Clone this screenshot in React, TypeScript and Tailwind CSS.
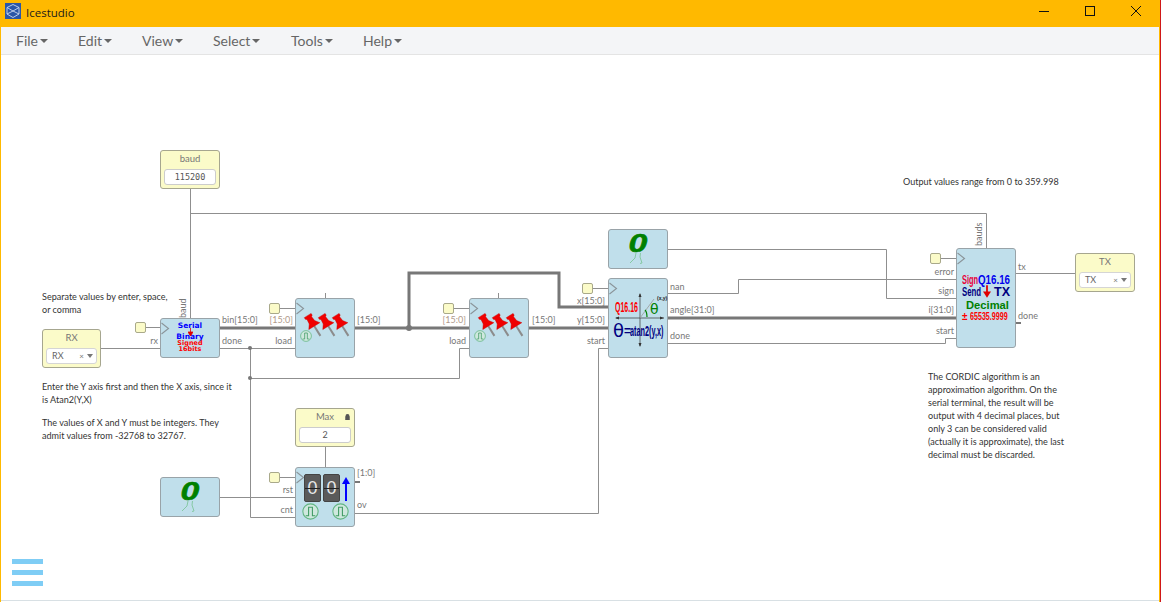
import React from "react";

const LATO = "font-['Lato','Open_Sans',sans-serif]";

function Clock({ className }: { className: string }) {
  return (
    <svg className={`absolute ${className}`} width="9" height="13" viewBox="0 0 9 13">
      <path d="M0.5 1 L7.5 6.5 L0.5 12" fill="none" stroke="#8a9499" strokeWidth="1.1" />
    </svg>
  );
}

function Pulse({ className, size = 14 }: { className: string; size?: number }) {
  return (
    <svg className={`absolute ${className}`} width={size} height={size} viewBox="0 0 16 16">
      <circle cx="8" cy="8" r="7.2" fill="#cfe8de" stroke="#62b583" strokeWidth="1" />
      <path d="M3.5 12 H6.2 V4 H9.8 V12 H12.5" fill="none" stroke="#3f9a63" strokeWidth="1" />
    </svg>
  );
}

function Pins() {
  const one = (x: number) => (
    <g transform={`translate(${x} 0) rotate(-32 7 10)`} key={x}>
      <path d="M7 12 L7 24" stroke="#8c8c8c" strokeWidth="2" />
      <path d="M3 0 H11 V2 L9.7 3 L10.2 8 L13.5 12.5 H0.5 L3.8 8 L4.3 3 L3 2 Z" fill="#f00000" stroke="#c80000" strokeWidth="0.4" />
    </g>
  );
  return (
    <svg className="absolute left-[10px] top-[15px] overflow-visible" width="46" height="24" viewBox="0 0 46 24">
      {one(0)}
      {one(14)}
      {one(28)}
    </svg>
  );
}

function ZeroIcon() {
  return (
    <>
      <span className="absolute left-0 right-0 top-[-3px] scale-x-[1.3] text-center font-['Liberation_Sans',sans-serif] text-[26px] leading-[32px] font-bold italic text-[#008000] [-webkit-text-stroke:0.6px_#008000]">
        0
      </span>
      <svg className="absolute left-[20px] top-[22px]" width="16" height="14" viewBox="0 0 16 14">
        <path d="M7 1 L6 6 L1 11 M11.5 1 L11 5 L13 11 L11 11.5" fill="none" stroke="#86c9a4" strokeWidth="1" />
      </svg>
    </>
  );
}

function Wire({ d, w = 1 }: { d: string; w?: number }) {
  const color = w > 1 ? "#777777" : "#8f8f8f";
  return <path d={d} fill="none" stroke={color} strokeWidth={w} />;
}

function Label({ className, children }: { className: string; children: React.ReactNode }) {
  return <span className={`absolute whitespace-nowrap text-[9px] leading-[12px] text-[#777777] ${className}`}>{children}</span>;
}

function Comment({ className, children }: { className: string; children: React.ReactNode }) {
  return <div className={`absolute whitespace-nowrap text-[9.05px] leading-[13px] text-[#333333] ${className}`}>{children}</div>;
}

function Square({ className }: { className: string }) {
  return <div className={`absolute h-[11px] w-[11px] rounded-[2px] border border-[#a9a98a] bg-[#fbfbc9] ${className}`} />;
}

function SelectBox({ text }: { text: string }) {
  return (
    <div className="mx-[3px] flex h-[16px] items-center rounded-[3px] border border-[#d5d5d5] bg-white pl-[5px] pr-[3px] text-[9px] text-[#666666]">
      <span className="flex-1">{text}</span>
      <span className="mr-[3px] text-[8px] leading-none text-[#777777]">×</span>
      <svg width="6" height="4" viewBox="0 0 6 4">
        <path d="M0 0 H6 L3 4 Z" fill="#777777" />
      </svg>
    </div>
  );
}

function Panel({ className, title, children }: { className: string; title?: React.ReactNode; children: React.ReactNode }) {
  return (
    <div className={`absolute rounded-[3px] border border-[#a6a68f] bg-[#fbfbc9] ${className}`}>
      <div className="h-[18px] pt-[1px] text-center text-[9.5px] leading-[13px] text-[#777777]">{title}</div>
      {children}
    </div>
  );
}

function Block({ className, children }: { className: string; children?: React.ReactNode }) {
  return <div className={`absolute rounded-[3px] border border-[#99a3a8] bg-[#c0dfeb] ${className}`}>{children}</div>;
}

function Diagram() {
  return (
    <div className={`relative flex-1 bg-white ${LATO}`}>
      <svg className="absolute inset-0" width="1161" height="547" viewBox="0 55 1161 547">
        <Wire d="M190.5 188 V318" />
        <Wire d="M190 213.5 H986.5 V248" />
        <Wire d="M100 348.5 H160" />
        <Wire d="M146 327.5 H160" />
        <Wire d="M280 308.5 H295" />
        <Wire d="M454 308.5 H469" />
        <Wire d="M593 288.5 H608" />
        <Wire d="M280 477.5 H295" />
        <Wire d="M941 258.5 H956" />
        <Wire d="M220 328 H295" w={3} />
        <Wire d="M355 328 H469" w={3} />
        <Wire d="M409 328 V273 H559 V307 H608" w={3} />
        <Wire d="M529 328 H608" w={3} />
        <Wire d="M668 318 H956" w={3} />
        <Wire d="M220 348.5 H295" />
        <Wire d="M250.5 348 V517.5 H295" />
        <Wire d="M250 378.5 H459.5 V348.5 H469" />
        <Wire d="M220 497.5 H295" />
        <Wire d="M325.5 447 V467" />
        <Wire d="M355 513.5 H598.5 V348.5 H608" />
        <Wire d="M668 293.5 H738.5 V279.5 H956" />
        <Wire d="M668 249.5 H886.5 V298.5 H956" />
        <Wire d="M668 343.5 H945.5 V338.5 H956" />
        <Wire d="M1016 273.5 H1075" />
        <Wire d="M1016 323 H1021" w={2} />
        <Wire d="M355 482 H360" w={2} />
        <Wire d="M325.5 293 V298" />
        <Wire d="M498.5 293 V298" />
        <circle cx="409" cy="328" r="3" fill="#777777" />
        <circle cx="250" cy="348" r="2" fill="#777777" />
        <circle cx="250" cy="378" r="2" fill="#777777" />
      </svg>

      <Comment className="left-[903px] top-[120px]">Output values range from 0 to 359.998</Comment>
      <Comment className="left-[42px] top-[235px]">
        Separate values by enter, space,
        <br />
        or comma
      </Comment>
      <Comment className="left-[42px] top-[325px]">
        Enter the Y axis first and then the X axis, since it
        <br />
        is Atan2(Y,X)
        <br />
        <span className="block h-[10px]" />
        The values of X and Y must be integers. They
        <br />
        admit values from -32768 to 32767.
      </Comment>
      <Comment className="left-[928px] top-[315px]">
        The CORDIC algorithm is an
        <br />
        approximation algorithm. On the
        <br />
        serial terminal, the result will be
        <br />
        output with 4 decimal places, but
        <br />
        only 3 can be considered valid
        <br />
        (actually it is approximate), the last
        <br />
        decimal must be discarded.
      </Comment>

      <Panel className="left-[160px] top-[95px] h-[39px] w-[60px]" title="baud">
        <div className="mx-[3px] flex h-[16px] items-center justify-center rounded-[3px] border border-[#cccccc] bg-white font-['DejaVu_Sans_Mono',monospace] text-[8.5px] text-[#555555]">
          115200
        </div>
      </Panel>
      <Panel className="left-[42px] top-[274px] h-[39px] w-[59px]" title="RX">
        <SelectBox text="RX" />
      </Panel>
      <Panel className="left-[1075px] top-[198px] h-[39px] w-[60px]" title="TX">
        <SelectBox text="TX" />
      </Panel>
      <Panel
        className="left-[295px] top-[353px] h-[39px] w-[60px]"
        title={
          <span className="relative block">
            Max
            <svg className="absolute right-[4px] top-[4px]" width="5" height="6" viewBox="0 0 6 7">
              <path d="M1 3 V2 A2 2 0 0 1 5 2 V3 M0.5 3 H5.5 V7 H0.5 Z" fill="#555555" stroke="#555555" strokeWidth="0.5" />
            </svg>
          </span>
        }
      >
        <div className="mx-[3px] flex h-[16px] items-center justify-center rounded-[3px] border border-[#cccccc] bg-white text-[9px] text-[#555555]">
          2
        </div>
      </Panel>

      <Square className="left-[135px] top-[267px]" />
      <Square className="left-[269px] top-[248px]" />
      <Square className="left-[443px] top-[248px]" />
      <Square className="left-[582px] top-[228px]" />
      <Square className="left-[269px] top-[417px]" />
      <Square className="left-[930px] top-[198px]" />

      <Block className="left-[160px] top-[263px] h-[40px] w-[60px]">
        <Clock className="left-0 top-[3px]" />
        <span className="absolute left-0 right-0 top-[2px] text-center font-['DejaVu_Sans',sans-serif] text-[7.5px] leading-[9px] font-bold text-[#0000ff]">Serial</span>
        <span className="absolute left-0 right-0 top-[15px] text-center font-['DejaVu_Sans',sans-serif] text-[7.5px] leading-[6px] font-bold text-[#0000ff]">Binary</span>
        <svg className="absolute left-[27px] top-[9px]" width="5" height="8" viewBox="0 0 5 8">
          <path d="M2.5 0 V5 M0 4 L2.5 8 L5 4 Z" fill="#e00000" stroke="#e00000" strokeWidth="0.8" />
        </svg>
        <span className="absolute left-0 right-0 top-[21px] text-center font-['DejaVu_Sans',sans-serif] text-[6.5px] leading-[6px] font-bold text-[#ff0000]">Signed</span>
        <span className="absolute left-0 right-0 top-[27px] text-center font-['DejaVu_Sans',sans-serif] text-[6.5px] leading-[6px] font-bold text-[#ff0000]">16bits</span>
      </Block>

      <Block className="left-[295px] top-[243px] h-[60px] w-[60px]">
        <Clock className="left-0 top-[3px]" />
        <Pins />
        <Pulse className="left-[4px] top-[31px]" size={12} />
      </Block>
      <Block className="left-[469px] top-[243px] h-[60px] w-[60px]">
        <Clock className="left-0 top-[3px]" />
        <Pins />
        <Pulse className="left-[4px] top-[31px]" size={12} />
      </Block>

      <Block className="left-[608px] top-[174px] h-[40px] w-[60px]">
        <ZeroIcon />
      </Block>
      <Block className="left-[160px] top-[422px] h-[40px] w-[60px]">
        <ZeroIcon />
      </Block>

      <Block className="left-[608px] top-[223px] h-[80px] w-[60px]">
        <Clock className="left-0 top-[3px]" />
        <svg className="absolute left-[5px] top-[14px]" width="50" height="54" viewBox="0 0 50 54">
          <path d="M26 1 V53 M2 25 H50" stroke="#333333" strokeWidth="0.7" />
          <path d="M26 0 L24.5 4 H27.5 Z M26 54 L24.5 50 H27.5 Z M1 25 L5 23.5 V26.5 Z M50 25 L46 23.5 V26.5 Z" fill="#333333" />
          <path d="M26 25 L40 6" stroke="#999999" strokeWidth="0.8" />
          <path d="M33 24 Q33 19 31 17" fill="none" stroke="#008000" strokeWidth="1.2" />
        </svg>
        <span className="absolute left-[6px] top-[20px] origin-left scale-x-[0.5] font-['Liberation_Sans',sans-serif] text-[14px] leading-[16px] font-bold text-[#ff0000]">Q16.16</span>
        <span className="absolute left-[41px] top-[22px] font-['DejaVu_Sans',sans-serif] text-[14px] leading-[16px] text-[#008000]">θ</span>
        <span className="absolute left-[48px] top-[16px] font-['Liberation_Sans',sans-serif] text-[5px] leading-[6px] font-bold text-[#222222]">(x,y)</span>
        <span className="absolute left-[4px] top-[41px] font-['DejaVu_Sans',sans-serif] text-[18px] leading-[22px] text-[#000080]">θ</span>
        <span className="absolute left-[15px] top-[45px] font-['Liberation_Sans',sans-serif] text-[12px] leading-[14px] font-bold text-[#000080]">=</span>
        <span className="absolute left-[21px] top-[44px] origin-left scale-x-[0.52] font-['Liberation_Sans',sans-serif] text-[14px] leading-[16px] font-bold text-[#000080]">atan2(y,x)</span>
      </Block>

      <Block className="left-[295px] top-[412px] h-[60px] w-[60px]">
        <Clock className="left-0 top-[3px]" />
        <div className="absolute left-[8px] top-[6px] flex gap-[2px]">
          {[0, 1].map((i) => (
            <div key={i} className="relative h-[28px] w-[17px] rounded-[2px] border border-[#444444] bg-[#5a5a5a] text-center font-['Liberation_Sans',sans-serif] text-[18px] leading-[26px] text-[#e8e8e8]">
              0
              <div className="absolute left-0 right-0 top-[13px] h-px bg-[#222222]" />
            </div>
          ))}
        </div>
        <svg className="absolute left-[46px] top-[9px]" width="8" height="24" viewBox="0 0 8 24">
          <path d="M4 5 V24" stroke="#0000ff" strokeWidth="2" />
          <path d="M4 0 L8 7 H0 Z" fill="#0000ff" />
        </svg>
        <Pulse className="left-[6px] top-[35px]" size={17} />
        <Pulse className="left-[36px] top-[35px]" size={17} />
      </Block>

      <Block className="left-[956px] top-[193px] h-[100px] w-[60px]">
        <Clock className="left-0 top-[3px]" />
        <span className="absolute left-[5px] top-[24px] origin-left scale-x-[0.62] font-['Liberation_Sans',sans-serif] text-[12px] leading-[14px] font-bold text-[#e8003a]">Sign</span>
        <span className="absolute left-[21px] top-[24px] origin-left scale-x-[0.78] font-['Liberation_Sans',sans-serif] text-[12.5px] leading-[14px] font-bold text-[#0000ee]">Q16.16</span>
        <span className="absolute left-[5px] top-[36px] origin-left scale-x-[0.65] font-['Liberation_Sans',sans-serif] text-[12px] leading-[14px] font-bold text-[#000080]">Send</span>
        <svg className="absolute left-[26px] top-[36px]" width="8" height="13" viewBox="0 0 9 14">
          <path d="M4.5 0 V8" stroke="#e00000" strokeWidth="2" />
          <path d="M0 7 H9 L4.5 14 Z" fill="#e00000" />
        </svg>
        <span className="absolute left-[37px] top-[36px] font-['Liberation_Sans',sans-serif] text-[12.5px] leading-[14px] font-bold text-[#000080]">TX</span>
        <span className="absolute left-[9px] top-[49px] font-['Liberation_Sans',sans-serif] text-[11.2px] leading-[14px] font-bold text-[#008000]">Decimal</span>
        <span className="absolute left-[5px] top-[61px] font-['Liberation_Sans',sans-serif] text-[10px] leading-[13px] font-bold text-[#ff0000]">±</span>
        <span className="absolute left-[13px] top-[60px] origin-left scale-x-[0.62] font-['Liberation_Sans',sans-serif] text-[11.5px] leading-[14px] font-bold text-[#ff0000]">65535.9999</span>
      </Block>

      <Label className="left-[177px] top-[242px]">
        <span className="block translate-y-[21px] origin-top-left -rotate-90">baud</span>
      </Label>
      <Label className="left-[973px] top-[168px]">
        <span className="block translate-y-[23px] origin-top-left -rotate-90">bauds</span>
      </Label>
      <Label className="right-[1003px] top-[280px]">rx</Label>
      <Label className="left-[222px] top-[259px]">bin[15:0]</Label>
      <Label className="left-[222px] top-[280px]">done</Label>
      <Label className="right-[868px] top-[259px] text-[#b09a8a]">[15:0]</Label>
      <Label className="right-[869px] top-[280px]">load</Label>
      <Label className="left-[357px] top-[259px]">[15:0]</Label>
      <Label className="right-[695px] top-[259px] text-[#b09a8a]">[15:0]</Label>
      <Label className="right-[695px] top-[280px]">load</Label>
      <Label className="left-[532px] top-[259px]">[15:0]</Label>
      <Label className="right-[556px] top-[240px]">x[15:0]</Label>
      <Label className="right-[556px] top-[259px]">y[15:0]</Label>
      <Label className="right-[556px] top-[280px]">start</Label>
      <Label className="left-[670px] top-[226px]">nan</Label>
      <Label className="left-[670px] top-[249px]">angle[31:0]</Label>
      <Label className="left-[670px] top-[275px]">done</Label>
      <Label className="right-[207px] top-[211px]">error</Label>
      <Label className="right-[207px] top-[230px]">sign</Label>
      <Label className="right-[207px] top-[249px]">i[31:0]</Label>
      <Label className="right-[207px] top-[270px]">start</Label>
      <Label className="left-[1018px] top-[206px]">tx</Label>
      <Label className="left-[1018px] top-[255px]">done</Label>
      <Label className="right-[868px] top-[429px]">rst</Label>
      <Label className="right-[868px] top-[449px]">cnt</Label>
      <Label className="left-[357px] top-[412px]">[1:0]</Label>
      <Label className="left-[357px] top-[444px]">ov</Label>

      <div className="absolute bottom-[16px] left-[12px] flex w-[31px] flex-col gap-[6px]">
        <div className="h-[5px] bg-[#7fcdf5]" />
        <div className="h-[5px] bg-[#7fcdf5]" />
        <div className="h-[5px] bg-[#7fcdf5]" />
      </div>
    </div>
  );
}

const MENU: [string, string][] = [
  ["File", "w-[62px]"],
  ["Edit", "w-[64px]"],
  ["View", "w-[71px]"],
  ["Select", "w-[78px]"],
  ["Tools", "w-[72px]"],
  ["Help", "w-[60px]"],
];

export default function App() {
  return (
    <div className="relative flex h-[602px] w-[1161px] flex-col overflow-hidden bg-white">
      <header className="flex h-[27px] shrink-0 items-center bg-[#ffb900] pb-[5px] font-['Open_Sans',sans-serif]">
        <svg className="ml-[5px]" width="16" height="16" viewBox="0 0 16 16">
          <rect width="16" height="16" fill="#2b57a7" />
          <path d="M8 1.5 L14 4.5 V11 L8 14.5 L2 11 V4.5 Z M2 4.5 L8 8 L14 4.5 M2 11 L8 8 L14 11" fill="none" stroke="#c9d8ef" strokeWidth="0.9" />
        </svg>
        <span className="ml-[5px] mt-[3px] flex-1 text-[11.5px] text-[#1a1a1a]">Icestudio</span>
        <svg className="mr-[36px]" width="10" height="10" viewBox="0 0 10 10">
          <path d="M0 5.5 H10" stroke="#111111" strokeWidth="1" />
        </svg>
        <svg className="mr-[36px]" width="10" height="10" viewBox="0 0 10 10">
          <rect x="0.5" y="0.5" width="9" height="9" fill="none" stroke="#111111" strokeWidth="1" />
        </svg>
        <svg className="mr-[20px]" width="10" height="10" viewBox="0 0 10 10">
          <path d="M0 0 L10 10 M10 0 L0 10" stroke="#111111" strokeWidth="1" />
        </svg>
      </header>
      <nav className={`flex h-[28px] shrink-0 items-center border-b border-[#e4e4e4] bg-[#f4f5f7] pl-[16px] text-[14px] text-[#666666] ${LATO}`}>
        {MENU.map(([name, w]) => (
          <div key={name} className={`flex items-center ${w}`}>
            <span>{name}</span>
            <svg className="ml-[2px]" width="8" height="4" viewBox="0 0 8 4">
              <path d="M0 0 H8 L4 4 Z" fill="#666666" />
            </svg>
          </div>
        ))}
      </nav>
      <Diagram />
      <div className="absolute bottom-[1px] left-0 right-0 h-px bg-[#d8e0e4]" />
      <div className="absolute bottom-0 left-0 top-[27px] w-px bg-[#ffb900]" />
      <div className="absolute bottom-0 right-px top-[27px] w-px bg-[#ffb900]" />
      <div className="absolute bottom-0 right-0 top-0 w-px bg-[#d01818]" />
    </div>
  );
}
